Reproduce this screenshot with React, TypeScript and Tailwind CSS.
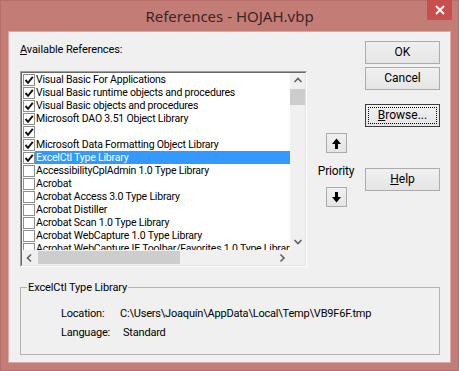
import React from "react";

type Ref = { name: string; checked: boolean; selected?: boolean };

const refs: Ref[] = [
  { name: "Visual Basic For Applications", checked: true },
  { name: "Visual Basic runtime objects and procedures", checked: true },
  { name: "Visual Basic objects and procedures", checked: true },
  { name: "Microsoft DAO 3.51 Object Library", checked: true },
  { name: "", checked: true },
  { name: "Microsoft Data Formatting Object Library", checked: true },
  { name: "ExcelCtl Type Library", checked: true, selected: true },
  { name: "AccessibilityCplAdmin 1.0 Type Library", checked: false },
  { name: "Acrobat", checked: false },
  { name: "Acrobat Access 3.0 Type Library", checked: false },
  { name: "Acrobat Distiller", checked: false },
  { name: "Acrobat Scan 1.0 Type Library", checked: false },
  { name: "Acrobat WebCapture 1.0 Type Library", checked: false },
  { name: "Acrobat WebCapture IE Toolbar/Favorites 1.0 Type Library", checked: false },
];

const titleFont = { fontFamily: '"Noto Sans", "Open Sans", sans-serif' };
const dlgFont = { fontFamily: 'Roboto, "Noto Sans", sans-serif' };

function Chevron({ dir }: { dir: "up" | "down" | "left" | "right" }) {
  const d = {
    up: "M1.5 6 L5 2.5 L8.5 6",
    down: "M1.5 3 L5 6.5 L8.5 3",
    left: "M6 1.5 L2.5 5 L6 8.5",
    right: "M3.5 1.5 L7 5 L3.5 8.5",
  }[dir];
  return (
    <svg width="10" height="10" viewBox="0 0 10 10">
      <path d={d} fill="none" stroke="#606060" strokeWidth="1.6" />
    </svg>
  );
}

function Row({ r }: { r: Ref }) {
  return (
    <div className="flex h-[13px] items-center">
      <span className="ml-px flex h-[12px] w-[12px] shrink-0 items-center justify-center border border-[#8e8f8f] bg-white">
        {r.checked && (
          <svg width="10" height="10" viewBox="0 0 10 10">
            <path d="M1.5 5 L4 7.8 L8.8 1.8" fill="none" stroke="#111" strokeWidth="1.9" />
          </svg>
        )}
      </span>
      <span
        className={`h-[13px] flex-1 whitespace-nowrap pl-px text-[10.5px] leading-[13px] tracking-[-0.2px] ${
          r.selected ? "bg-[#3399ff] text-white" : "text-black"
        }`}
      >
        {r.name}
      </span>
    </div>
  );
}

function Button({ children, focused }: { children: React.ReactNode; focused?: boolean }) {
  return (
    <div
      className={`flex h-[23px] w-[75px] items-center justify-center border bg-gradient-to-b from-[#f0f0f0] to-[#e5e5e5] text-[12px] leading-[15px] text-black ${
        focused ? "border-[#3c3c3c] p-[2px]" : "border-[#acacac]"
      }`}
    >
      {focused ? (
        <span className="flex h-full w-full items-center justify-center border border-dotted border-black">
          {children}
        </span>
      ) : (
        children
      )}
    </div>
  );
}

function ArrowButton({ down }: { down?: boolean }) {
  return (
    <div className="flex h-[20px] w-[21px] items-center justify-center border border-[#acacac] bg-gradient-to-b from-[#f0f0f0] to-[#e5e5e5]">
      <svg width="9" height="11" viewBox="0 0 9 11">
        {down ? (
          <path d="M3 0 H6 V5 H9 L4.5 10.5 L0 5 H3 Z" fill="#000" />
        ) : (
          <path d="M3 11 H6 V6 H9 L4.5 0.5 L0 6 H3 Z" fill="#000" />
        )}
      </svg>
    </div>
  );
}

export default function App() {
  return (
    <div className="flex h-[371px] w-[459px] flex-col border border-[#b56e69] bg-[#c47c77] px-[7px] pb-[7px]">
      <div className="relative flex h-[30px] shrink-0 items-center justify-center" style={titleFont}>
        <span className="text-[15px] text-[#3a2826]">References - HOJAH.vbp</span>
        <div className="absolute right-[-1px] top-[-1px] flex h-[20px] w-[25px] items-center justify-center bg-[#c7504f]">
          <svg width="10" height="10" viewBox="0 0 10 10">
            <path d="M1 1 L9 9 M9 1 L1 9" stroke="#fff" strokeWidth="1.8" />
          </svg>
        </div>
      </div>
      <div
        className="flex flex-1 flex-col border border-[#d9a9a5] bg-[#f0f0f0] pl-[11px] pt-[9px]"
        style={dlgFont}
      >
        <div className="flex">
          <div className="flex w-[287px] flex-col">
            <div className="mt-[2px] h-[13px] text-[11px] leading-[13px] tracking-[-0.1px] text-black">
              <span className="underline">A</span>vailable References:
            </div>
            <div className="mt-[15px] h-[196px] border border-b-white border-l-[#a0a0a0] border-r-white border-t-[#a0a0a0]">
              <div className="flex h-full flex-col border border-b-[#e3e3e3] border-l-[#696969] border-r-[#e3e3e3] border-t-[#696969] bg-white">
                <div className="flex h-[177px]">
                  <div className="w-[268px] overflow-hidden">
                    {refs.map((r, i) => (
                      <Row key={i} r={r} />
                    ))}
                  </div>
                  <div className="flex w-[15px] flex-col bg-[#f0f0f0]">
                    <div className="flex h-[16px] items-center justify-center">
                      <Chevron dir="up" />
                    </div>
                    <div className="h-[16px] bg-[#cdcdcd]" />
                    <div className="flex-1" />
                    <div className="flex h-[16px] items-center justify-center">
                      <Chevron dir="down" />
                    </div>
                  </div>
                </div>
                <div className="flex h-[15px] bg-[#f0f0f0]">
                  <div className="flex w-[16px] items-center justify-center">
                    <Chevron dir="left" />
                  </div>
                  <div className="my-px w-[142px] bg-[#cdcdcd]" />
                  <div className="flex-1" />
                  <div className="flex w-[16px] items-center justify-center">
                    <Chevron dir="right" />
                  </div>
                  <div className="w-[15px]" />
                </div>
              </div>
            </div>
          </div>
          <div className="ml-[9px] flex w-[40px] flex-col items-center pt-[92px]">
            <ArrowButton />
            <div className="mt-[11px] h-[15px] text-[12px] leading-[15px] tracking-[-0.2px] text-black">Priority</div>
            <div className="mt-[8px]">
              <ArrowButton down />
            </div>
          </div>
          <div className="ml-[9px] flex flex-col">
            <Button>OK</Button>
            <div className="mt-[3px]">
              <Button>Cancel</Button>
            </div>
            <div className="mt-[14px]">
              <Button focused>
                <span>
                  <span className="underline">B</span>rowse...
                </span>
              </Button>
            </div>
            <div className="mt-[41px]">
              <Button>
                <span>
                  <span className="underline">H</span>elp
                </span>
              </Button>
            </div>
          </div>
        </div>
        <fieldset className="mt-[14px] w-[420px] border border-[#b4b4b4] pb-[11px]">
          <legend className="ml-[6px] px-px text-[11px] leading-[13px] tracking-[-0.1px] text-black">
            ExcelCtl Type Library
          </legend>
          <div className="ml-[40px] mt-[11px] flex h-[19px] items-center text-[11px] tracking-[-0.2px] text-black">
            <span className="w-[59px]">Location:</span>
            <span>C:\Users\Joaquín\AppData\Local\Temp\VB9F6F.tmp</span>
          </div>
          <div className="ml-[40px] flex h-[19px] items-center text-[11px] tracking-[-0.2px] text-black">
            <span className="w-[62px]">Language:</span>
            <span>Standard</span>
          </div>
        </fieldset>
      </div>
    </div>
  );
}
